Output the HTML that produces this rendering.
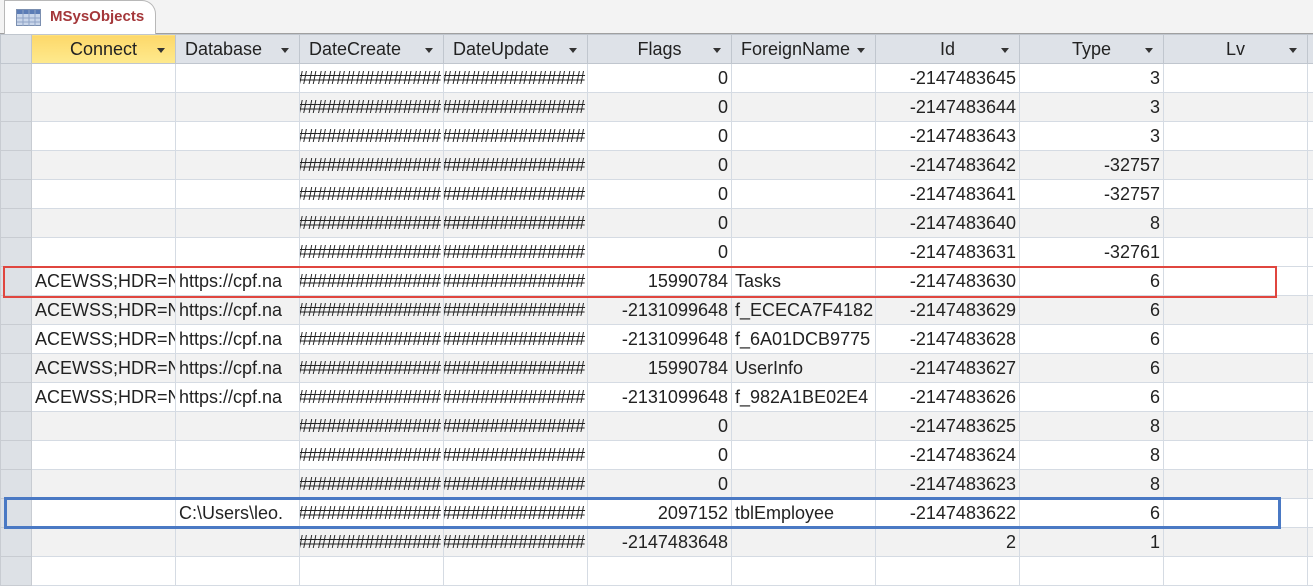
<!DOCTYPE html>
<html><head><meta charset="utf-8"><style>
body{margin:0;width:1313px;height:564px;overflow:hidden;background:#fff;font-family:"Liberation Sans",sans-serif;position:relative}
.top{position:absolute;left:0;top:0;width:1313px;height:34px;background:#f3f3f3;border-bottom:1px solid #a0a0a0;box-sizing:border-box}
.tab{position:absolute;left:4px;top:0;width:152px;height:34px;background:#fff;border:1px solid #b8b8b8;border-bottom:none;border-radius:0 14px 0 0;box-sizing:border-box}
.tab span{position:absolute;left:45px;top:7px;color:#a4373a;font-weight:bold;font-size:15px}
table{position:absolute;left:0;top:34px;border-collapse:collapse;table-layout:fixed;width:1313px}
td{height:29px;border:1px solid #d5dbe3;padding:0 3px;font-size:18px;color:#222;white-space:nowrap;overflow:hidden;box-sizing:border-box}
tr.h td{background:#dee2e8;border-color:#c0c6ce;height:29px;position:relative;font-size:18px;text-align:center}
tr.h td.l{text-align:left;padding-left:9px}
tr.h td.sel{background:linear-gradient(#fdd86a,#feea8e)}
tr.h td i{position:absolute;right:10px;top:13px;border:4px solid transparent;border-top:5px solid #333;border-bottom:none;width:0;height:0}
td.s{background:#dde1e6;border-color:#c8ccd2}
tr.g td{background:#f2f2f2}
tr td.s{background:#dde1e6}
.r{text-align:right}
.hs{text-indent:-5px;font-size:18px;letter-spacing:-0.5px;text-overflow:clip}
.box{position:absolute;box-sizing:border-box}
</style></head><body>
<div class="top"><div class="tab"><svg style="position:absolute;left:11px;top:8px" width="25" height="17"><rect x="0.5" y="0.5" width="24" height="16" fill="#c9d6ea" stroke="#7b8fb0"/><rect x="1" y="1" width="23" height="4" fill="#5b7cb6"/><path d="M1 9h23M1 13h23M7 1v16M13 1v16M19 1v16" stroke="#8ea3c6"/></svg><span>MSysObjects</span></div></div>
<table>
<colgroup><col style="width:31px"><col style="width:144px"><col style="width:124px"><col style="width:144px"><col style="width:144px"><col style="width:144px"><col style="width:144px"><col style="width:144px"><col style="width:144px"><col style="width:144px"><col style="width:6px"></colgroup>
<tr class="h"><td class="s"></td><td class="sel">Connect<i></i></td><td class="l">Database<i></i></td><td class="l">DateCreate<i></i></td><td class="l">DateUpdate<i></i></td><td>Flags<i></i></td><td class="l">ForeignName<i></i></td><td>Id<i></i></td><td>Type<i></i></td><td>Lv<i></i></td><td></td></tr>
<tr><td class="s"></td><td></td><td></td><td class="hs">###############</td><td class="hs">###############</td><td class="r">0</td><td></td><td class="r">-2147483645</td><td class="r">3</td><td></td><td></td></tr>
<tr class="g"><td class="s"></td><td></td><td></td><td class="hs">###############</td><td class="hs">###############</td><td class="r">0</td><td></td><td class="r">-2147483644</td><td class="r">3</td><td></td><td></td></tr>
<tr><td class="s"></td><td></td><td></td><td class="hs">###############</td><td class="hs">###############</td><td class="r">0</td><td></td><td class="r">-2147483643</td><td class="r">3</td><td></td><td></td></tr>
<tr class="g"><td class="s"></td><td></td><td></td><td class="hs">###############</td><td class="hs">###############</td><td class="r">0</td><td></td><td class="r">-2147483642</td><td class="r">-32757</td><td></td><td></td></tr>
<tr><td class="s"></td><td></td><td></td><td class="hs">###############</td><td class="hs">###############</td><td class="r">0</td><td></td><td class="r">-2147483641</td><td class="r">-32757</td><td></td><td></td></tr>
<tr class="g"><td class="s"></td><td></td><td></td><td class="hs">###############</td><td class="hs">###############</td><td class="r">0</td><td></td><td class="r">-2147483640</td><td class="r">8</td><td></td><td></td></tr>
<tr><td class="s"></td><td></td><td></td><td class="hs">###############</td><td class="hs">###############</td><td class="r">0</td><td></td><td class="r">-2147483631</td><td class="r">-32761</td><td></td><td></td></tr>
<tr><td class="s"></td><td>ACEWSS;HDR=NO</td><td>https://cpf.na</td><td class="hs">###############</td><td class="hs">###############</td><td class="r">15990784</td><td>Tasks</td><td class="r">-2147483630</td><td class="r">6</td><td></td><td></td></tr>
<tr class="g"><td class="s"></td><td>ACEWSS;HDR=NO</td><td>https://cpf.na</td><td class="hs">###############</td><td class="hs">###############</td><td class="r">-2131099648</td><td>f_ECECA7F4182</td><td class="r">-2147483629</td><td class="r">6</td><td></td><td></td></tr>
<tr><td class="s"></td><td>ACEWSS;HDR=NO</td><td>https://cpf.na</td><td class="hs">###############</td><td class="hs">###############</td><td class="r">-2131099648</td><td>f_6A01DCB9775</td><td class="r">-2147483628</td><td class="r">6</td><td></td><td></td></tr>
<tr class="g"><td class="s"></td><td>ACEWSS;HDR=NO</td><td>https://cpf.na</td><td class="hs">###############</td><td class="hs">###############</td><td class="r">15990784</td><td>UserInfo</td><td class="r">-2147483627</td><td class="r">6</td><td></td><td></td></tr>
<tr><td class="s"></td><td>ACEWSS;HDR=NO</td><td>https://cpf.na</td><td class="hs">###############</td><td class="hs">###############</td><td class="r">-2131099648</td><td>f_982A1BE02E4</td><td class="r">-2147483626</td><td class="r">6</td><td></td><td></td></tr>
<tr class="g"><td class="s"></td><td></td><td></td><td class="hs">###############</td><td class="hs">###############</td><td class="r">0</td><td></td><td class="r">-2147483625</td><td class="r">8</td><td></td><td></td></tr>
<tr><td class="s"></td><td></td><td></td><td class="hs">###############</td><td class="hs">###############</td><td class="r">0</td><td></td><td class="r">-2147483624</td><td class="r">8</td><td></td><td></td></tr>
<tr class="g"><td class="s"></td><td></td><td></td><td class="hs">###############</td><td class="hs">###############</td><td class="r">0</td><td></td><td class="r">-2147483623</td><td class="r">8</td><td></td><td></td></tr>
<tr><td class="s"></td><td></td><td>C:\Users\leo.</td><td class="hs">###############</td><td class="hs">###############</td><td class="r">2097152</td><td>tblEmployee</td><td class="r">-2147483622</td><td class="r">6</td><td></td><td></td></tr>
<tr class="g"><td class="s"></td><td></td><td></td><td class="hs">###############</td><td class="hs">###############</td><td class="r">-2147483648</td><td></td><td class="r">2</td><td class="r">1</td><td></td><td></td></tr>
<tr><td class="s"></td><td></td><td></td><td></td><td></td><td></td><td></td><td></td><td></td><td></td><td></td></tr>
</table>
<div class="box" style="left:3px;top:266px;width:1274px;height:32px;border:2px solid #e0463f"></div>
<div class="box" style="left:4px;top:497px;width:1277px;height:32px;border:3px solid #4a79c4"></div>
</body></html>
